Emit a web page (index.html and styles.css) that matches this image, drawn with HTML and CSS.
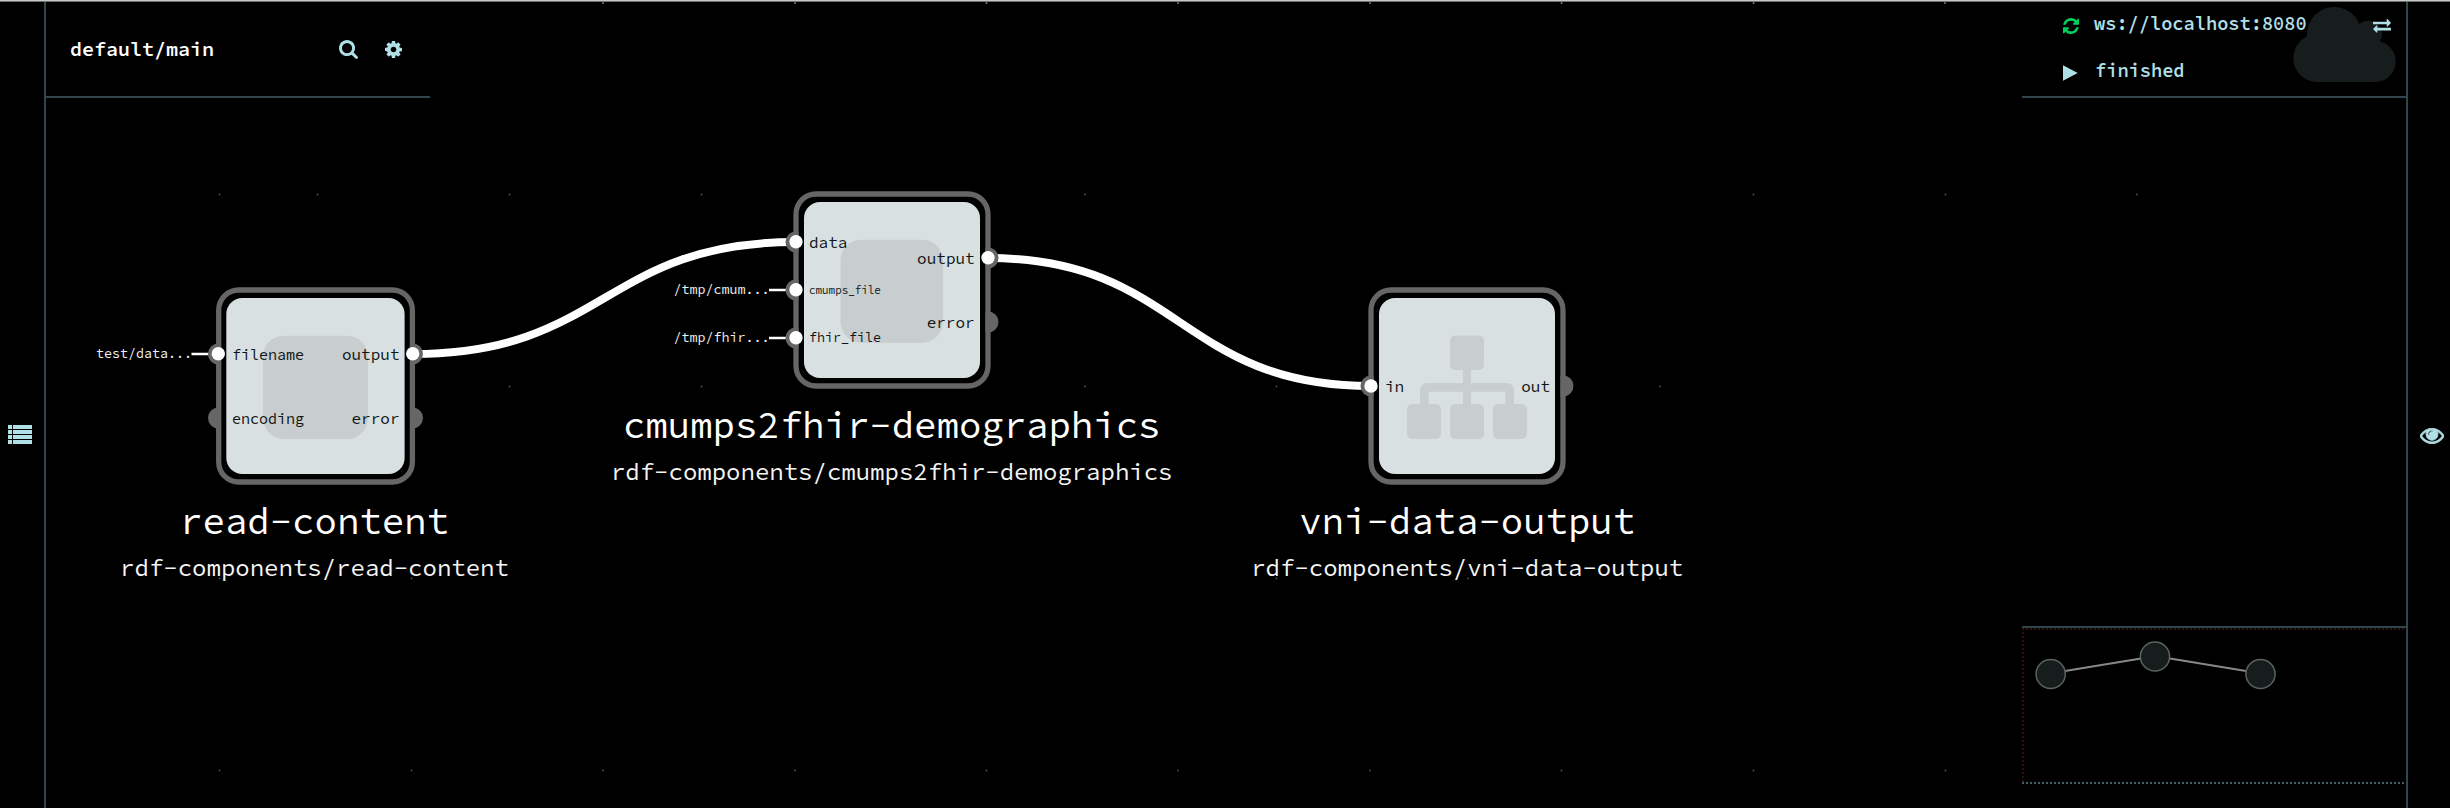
FILE: index.html
```html
<!DOCTYPE html>
<html lang="en">
<head>
<meta charset="utf-8">
<title>default/main</title>
<link rel="stylesheet" href="styles.css">
</head>
<body>
<div class="app">
  <aside class="rail rail-left">
    <svg class="icon-list" viewBox="0 0 24 19"><path d="M0 0h4v4h-4zM5 0h19v4h-19zM0 5h4v4h-4zM5 5h19v4h-19zM0 10h4v4h-4zM5 10h19v4h-19zM0 15h4v4h-4zM5 15h19v4h-19z"/></svg>
  </aside>

  <main class="stage">
    <svg class="graph" viewBox="46 2 2360 806">
      <g class="grid-dots bright">
        <path d="M603 3h.01M795 3h.01M986.500 3h.01M1178 3h.01M1370 3h.01M1561.500 3h.01M1753.500 3h.01M1945 3h.01"/>
      </g>
      <g class="grid-dots">
        <path d="M219.500 194.500h.01M317.500 194.500h.01M509.500 194.500h.01M701.500 194.500h.01M1085 194.500h.01M1753.500 194.500h.01M1945.500 194.500h.01M2137 194.500h.01"/>
        <path d="M509.500 386.500h.01M701.500 386.500h.01M1085 386.500h.01M1276.500 386.500h.01M1660 386.500h.01"/>
        <path d="M219.500 578.500h.01M411.500 578.500h.01M1276.500 578.500h.01M1468 578.500h.01M1660 578.500h.01"/>
        <path d="M219.500 770.500h.01M411.500 770.500h.01M603 770.500h.01M795 770.500h.01M986.500 770.500h.01M1178 770.500h.01M1370 770.500h.01M1561.500 770.500h.01M1753.500 770.500h.01M1945.500 770.500h.01"/>
      </g>

      <path class="edge" d="M413 354C605 354 604 242 796 242"/>
      <path class="edge" d="M988 258C1180 258 1179 386 1371 386"/>
      <path class="iip" d="M191.500 354H209M769 290H787M769 338H787"/>

      <!-- read-content -->
      <rect class="ring" x="218.700" y="290" width="193.700" height="192" rx="20"/>
      <rect class="box" x="226.300" y="298" width="178.300" height="176" rx="16"/>
      <rect class="glyph" x="263" y="335.700" width="105" height="103.300" rx="21"/>
      <path class="port" d="M221 343.500V364.500H218.500A10.500 10.500 0 0 1 218.500 343.500zM221 407.500V428.500H218.500A10.500 10.500 0 0 1 218.500 407.500zM410 343.500V364.500H412.500A10.500 10.500 0 0 0 412.500 343.500zM410 407.500V428.500H412.500A10.500 10.500 0 0 0 412.500 407.500z"/>
      <circle class="plug" cx="218.300" cy="353.800" r="6.700"/>
      <circle class="plug" cx="412.700" cy="353.800" r="6.700"/>
      <text class="iip-label" x="96" y="358">test/data...</text>
      <text class="label l8" x="232" y="360">filename</text>
      <text class="label l8" x="232" y="424">encoding</text>
      <text class="label end" x="399.500" y="360">output</text>
      <text class="label end" x="399.500" y="424">error</text>
      <text class="title" x="314.500" y="534">read-content</text>
      <text class="sub" x="314.500" y="576">rdf-components/read-content</text>

      <!-- cmumps2fhir-demographics -->
      <rect class="ring" x="796" y="194" width="192" height="192" rx="20"/>
      <rect class="box" x="804" y="202" width="176" height="176" rx="16"/>
      <rect class="glyph" x="840.500" y="239.700" width="102.500" height="103" rx="21"/>
      <path class="port" d="M798.500 231.500V252.500H796A10.500 10.500 0 0 1 796 231.500zM798.500 279.500V300.500H796A10.500 10.500 0 0 1 796 279.500zM798.500 327.500V348.500H796A10.500 10.500 0 0 1 796 327.500zM985.500 247.500V268.500H988A10.500 10.500 0 0 0 988 247.500zM985.500 311.500V332.500H988A10.500 10.500 0 0 0 988 311.500z"/>
      <circle class="plug" cx="796" cy="241.800" r="6.700"/>
      <circle class="plug" cx="796" cy="289.800" r="6.700"/>
      <circle class="plug" cx="796" cy="337.800" r="6.700"/>
      <circle class="plug" cx="988" cy="257.800" r="6.700"/>
      <text class="iip-label" x="673.500" y="294">/tmp/cmum...</text>
      <text class="iip-label" x="673.500" y="342">/tmp/fhir...</text>
      <text class="label" x="809" y="248">data</text>
      <text class="label l11" x="809" y="294">cmumps_file</text>
      <text class="label l9" x="809" y="342">fhir_file</text>
      <text class="label end" x="974.700" y="264">output</text>
      <text class="label end" x="974.700" y="328">error</text>
      <text class="title" x="891.700" y="438">cmumps2fhir-demographics</text>
      <text class="sub" x="891.700" y="480">rdf-components/cmumps2fhir-demographics</text>

      <!-- vni-data-output -->
      <rect class="ring" x="1371" y="290" width="192" height="192" rx="20"/>
      <rect class="box" x="1379" y="298" width="176" height="176" rx="16"/>
      <path class="glyph" d="M1456 335.500h22q6 0 6 6v22.500q0 6-6 6h-7v13h35q8 0 8 8v13h7q6 0 6 6v23q0 6-6 6h-22q-6 0-6-6v-23q0-6 6-6h6.300v-12.300h-34.300v12.300h7q6 0 6 6v23q0 6-6 6h-22q-6 0-6-6v-23q0-6 6-6h7v-12.300h-34.300v12.300h6.300q6 0 6 6v23q0 6-6 6h-22q-6 0-6-6v-23q0-6 6-6h7v-13q0-8 8-8h35v-13h-7q-6 0-6-6v-22.500q0-6 6-6z"/>
      <path class="port" d="M1373.500 375.500V396.500H1371A10.500 10.500 0 0 1 1371 375.500zM1560.500 375.500V396.500H1563A10.500 10.500 0 0 0 1563 375.500z"/>
      <circle class="plug" cx="1371" cy="386" r="6.700"/>
      <text class="label" x="1385" y="392">in</text>
      <text class="label end" x="1550" y="392">out</text>
      <text class="title" x="1467.200" y="534">vni-data-output</text>
      <text class="sub" x="1467.200" y="576">rdf-components/vni-data-output</text>
    </svg>

    <div class="top-row">
      <header class="panel graph-panel">
        <h1 class="graph-name">default/main</h1>
        <svg class="icon-search" viewBox="64 128 1664 1664"><path d="M1216 832q0-185-131.500-316.500t-316.500-131.500-316.500 131.500-131.500 316.500 131.500 316.500 316.500 131.500 316.500-131.500 131.500-316.500zm512 832q0 52-38 90t-90 38q-54 0-90-38l-343-342q-179 124-399 124-143 0-273.500-55.500t-225-150-150-225-55.500-273.500 55.500-273.500 150-225 225-150 273.500-55.500 273.500 55.500 225 150 150 225 55.500 273.500q0 220-124 399l343 343q37 37 37 90z"/></svg>
        <svg class="icon-cog" viewBox="128 128 1536 1536"><path d="M1152 896q0-106-75-181t-181-75-181 75-75 181 75 181 181 75 181-75 75-181zm512-109v222q0 12-8 23t-20 13l-185 28q-19 54-39 91 35 50 107 138 10 12 10 25t-9 23q-27 37-99 108t-94 71q-12 0-26-9l-138-108q-44 23-91 38-16 136-29 186-7 28-36 28h-222q-14 0-24.500-8.500t-11.500-21.500l-28-184q-49-16-90-37l-141 107q-10 9-25 9-14 0-25-11-126-114-165-168-7-10-7-23 0-12 8-23 15-21 51-66.500t54-70.500q-27-50-41-99l-183-27q-13-2-21-12.500t-8-23.500v-222q0-12 8-23t19-13l186-28q14-46 39-92-40-57-107-138-10-12-10-24 0-10 9-23 26-36 98.500-107.500t94.500-71.500q13 0 26 10l138 107q44-23 91-38 16-136 29-186 7-28 36-28h222q14 0 24.500 8.500t11.500 21.500l28 184q49 16 90 37l142-107q9-9 24-9 13 0 25 10 129 119 165 170 7 8 7 22 0 12-8 23-15 21-51 66.500t-54 70.500q26 50 41 98l183 28q13 2 21 12.500t8 23.500z"/></svg>
      </header>

      <section class="panel runtime-panel">
        <svg class="cloud" viewBox="64 128 1920 1408"><path d="M1984 1152q0 159-112.500 271.500T1600 1536H512q-185 0-316.500-131.500T64 1088q0-132 71-241.500T322 683q-2-28-2-43 0-212 150-362t362-150q158 0 286.500 88T1305 446q70-62 167-62 106 0 181 75t75 181q0 75-41 138 129 30 213 134.500t84 239.500z"/></svg>
        <div class="runtime-row">
          <svg class="icon-refresh" viewBox="128 128 1536 1536"><path d="M1639 1056q0 5-1 7-64 268-268 434.500t-478 166.500q-146 0-282.500-55t-243.500-157l-129 129q-19 19-45 19t-45-19-19-45v-448q0-26 19-45t45-19h448q26 0 45 19t19 45-19 45l-137 137q71 66 161 102t187 36q134 0 250-65t186-179q11-17 53-117 8-23 30-23h192q13 0 22.500 9.500t9.500 22.500zm25-800v448q0 26-19 45t-45 19h-448q-26 0-45-19t-19-45 19-45l138-138q-148-137-349-137-134 0-250 65t-186 179q-11 17-53 117-8 23-30 23h-199q-13 0-22.500-9.500t-9.500-22.500v-7q65-268 270-434.500t480-166.500q146 0 284 55.500t245 156.500l130-129q19-19 45-19t45 19 19 45z"/></svg>
          <span class="runtime-text">ws://localhost:8080</span>
          <svg class="icon-exchange" viewBox="0 0 18 14"><path d="M0 2.700h13.700V0h.8L18 3.900 14.500 7.500h-.8V5.300H0zM18 8.800H4.300V6.500h-.8L0 10.100 3.500 13.500h.8V11.400H18z"/></svg>
        </div>
        <div class="runtime-row">
          <svg class="icon-play" viewBox="0 0 15 16"><path d="M0 .3 14.700 8 0 15.700z"/></svg>
          <span class="runtime-text">finished</span>
        </div>
      </section>
    </div>

    <div class="minimap">
      <svg viewBox="2022 628 384 156">
        <path class="mini-edge" d="M2065 671 2141 658.500M2170 658.500 2246 671"/>
        <circle class="mini-node" cx="2050.700" cy="674" r="14.600"/>
        <circle class="mini-node" cx="2155" cy="656.500" r="14.600"/>
        <circle class="mini-node" cx="2260.500" cy="674" r="14.600"/>
      </svg>
    </div>
  </main>

  <aside class="rail rail-right">
    <svg class="icon-eye" viewBox="0 384 1792 1152"><path d="M1664 960q-152-236-381-353 61 104 61 225 0 185-131.500 316.500t-316.500 131.500-316.500-131.500-131.500-316.500q0-121 61-225-229 117-381 353 133 205 333.500 326.500t434.500 121.500 434.500-121.500 333.500-326.500zm-720-384q0-20-14-34t-34-14q-125 0-214.500 89.500t-89.500 214.500q0 20 14 34t34 14 34-14 14-34q0-86 61-147t147-61q20 0 34-14t14-34zm848 384q0 34-20 69-140 230-376.500 368.500t-499.500 138.500-499.500-139-376.500-368q-20-35-20-69t20-69q140-229 376.500-368t499.500-139 499.500 139 376.500 368q20 35 20 69z"/></svg>
  </aside>
</div>
</body>
</html>
```
FILE: styles.css
```css
* { box-sizing: border-box; }

body {
  margin: 0;
  background: #000;
  font-family: "Source Code Pro", "DejaVu Sans Mono", monospace;
  color: #fff;
}

svg { display: block; fill: #b0dfe6; }

.app {
  display: grid;
  grid-template-columns: 46px 1fr 44px;
  height: 808px;
  border-top: 1px solid #c8c8c8;
  box-shadow: inset 0 1px #6e6e6e;
  padding-top: 1px;
  overflow: hidden;
}

.rail { padding-left: 8px; padding-top: 423px; }
.rail-left { border-right: 2px solid #2f464c; }
.rail-right { border-left: 2px solid #2f464c; padding-left: 12px; padding-top: 426px; }
.icon-list { width: 24px; height: 19px; }
.icon-eye { width: 24px; height: 16px; stroke: #b0dfe6; stroke-width: 60; }

.stage {
  position: relative;
  display: flex;
  flex-direction: column;
  justify-content: space-between;
  padding-bottom: 24px;
}

.graph { position: absolute; left: 0; top: 0; width: 2360px; height: 806px; }
.grid-dots { stroke: #5c5c5c; stroke-width: 1.6; stroke-linecap: square; }
.grid-dots.bright { stroke: #999; }
.edge { fill: none; stroke: #fff; stroke-width: 8; }
.iip { stroke: #fff; stroke-width: 2.6; }
.ring { fill: #000; stroke: #666; stroke-width: 5.3; }
.box { fill: #d8e0e2; }
.glyph { fill: #c8cdcf; }
.port { fill: #666; }
.plug { fill: #fff; }

.label { font-size: 16px; fill: #0f1414; }
.end { text-anchor: end; }
.l8 { font-size: 15px; }
.l9 { font-size: 13.33px; }
.l11 { font-size: 10.9px; }
.iip-label { font-size: 13.33px; fill: #f0f0f0; }
.title { font-size: 37.33px; text-anchor: middle; fill: #fff; }
.sub { font-size: 24px; text-anchor: middle; fill: #f4f4f4; }

.top-row { display: flex; justify-content: space-between; }
.panel {
  position: relative;
  width: 384px;
  height: 96px;
  background: #000;
  border-bottom: 2px solid #2f464c;
}

.graph-panel { display: flex; align-items: center; padding: 0 28px 0 24px; }
.graph-name { margin: 0; flex: 1; font-size: 20px; font-weight: 600; line-height: 26px; }
.icon-search { width: 19px; height: 19px; margin-right: 27px; }
.icon-cog { width: 17px; height: 17px; }

.runtime-panel { padding: 0 15px 0 41px; }
.runtime-row { position: relative; display: flex; align-items: center; height: 47px; }
.runtime-text { flex: 1; margin-bottom: 3px; font-size: 18.67px; font-weight: 600; line-height: 24px; color: #b0dfe6; }
.icon-refresh { width: 16px; height: 16px; fill: #00d05c; margin-right: 15px; }
.icon-play { width: 15px; height: 16px; margin-right: 17px; }
.icon-exchange { width: 18px; height: 14px; margin-top: 1px; }
.cloud { position: absolute; right: 10px; top: 5px; width: 103px; height: 75px; fill: #171c1c; }

.minimap {
  align-self: flex-end;
  width: 384px;
  height: 158px;
  border-top: 2px solid #2f464c;
  background:
    repeating-linear-gradient(90deg, #2c1010 0 2px, #000 2px 4px) 0 0 / 384px 2px no-repeat,
    repeating-linear-gradient(90deg, #42626a 0 2px, #000 2px 4px) 0 154px / 382px 2px no-repeat,
    repeating-linear-gradient(180deg, #2c1010 0 2px, #000 2px 4px) 0 0 / 2px 154px no-repeat;
}
.minimap svg { width: 384px; height: 156px; }
.mini-edge { stroke: #888; stroke-width: 2; }
.mini-node { fill: #171c1c; stroke: #58645f; stroke-width: 1.5; }
```
